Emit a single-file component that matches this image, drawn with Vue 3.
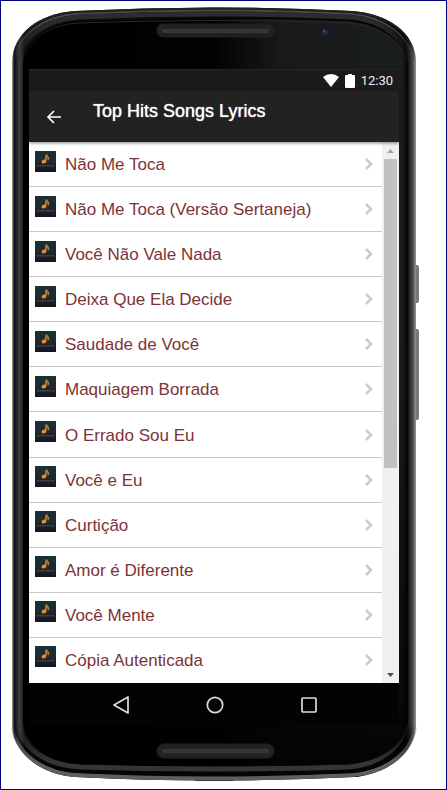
<script setup>
const songs = [
  'Não Me Toca',
  'Não Me Toca (Versão Sertaneja)',
  'Você Não Vale Nada',
  'Deixa Que Ela Decide',
  'Saudade de Você',
  'Maquiagem Borrada',
  'O Errado Sou Eu',
  'Você e Eu',
  'Curtição',
  'Amor é Diferente',
  'Você Mente',
  'Cópia Autenticada',
]
</script>

<template>
  <main class="page">
    <svg class="device" viewBox="0 0 447 790" preserveAspectRatio="none" aria-hidden="true">
      <defs>
        <linearGradient id="side" x1="12" x2="416" y1="0" y2="0" gradientUnits="userSpaceOnUse">
          <stop offset="0" stop-color="#b0b0b0" />
          <stop offset="0.004" stop-color="#333" />
          <stop offset="0.007" stop-color="#0c0c0c" />
          <stop offset="0.012" stop-color="#262626" />
          <stop offset="0.018" stop-color="#3c3c3c" />
          <stop offset="0.024" stop-color="#303030" />
          <stop offset="0.03" stop-color="#101010" />
          <stop offset="0.975" stop-color="#000" />
          <stop offset="0.982" stop-color="#1c1c1c" />
          <stop offset="0.993" stop-color="#505050" />
          <stop offset="1" stop-color="#999" />
        </linearGradient>
        <linearGradient id="face" x1="23" x2="408" y1="0" y2="0" gradientUnits="userSpaceOnUse">
          <stop offset="0" stop-color="#000" />
          <stop offset="0.5" stop-color="#020202" />
          <stop offset="0.67" stop-color="#181919" />
          <stop offset="0.985" stop-color="#1b1e1e" />
          <stop offset="1" stop-color="#040404" />
        </linearGradient>
        <linearGradient id="fade" x1="0" x2="0" y1="20" y2="770" gradientUnits="userSpaceOnUse">
          <stop offset="0" stop-color="#000" stop-opacity="0" />
          <stop offset="0.5" stop-color="#000" stop-opacity="0.1" />
          <stop offset="0.9" stop-color="#000" stop-opacity="0.7" />
          <stop offset="1" stop-color="#000" stop-opacity="0.9" />
        </linearGradient>
        <linearGradient id="ends" x1="0" x2="0" y1="0" y2="790" gradientUnits="userSpaceOnUse">
          <stop offset="0.025" stop-color="#fff" />
          <stop offset="0.08" stop-color="#000" />
          <stop offset="0.91" stop-color="#000" />
          <stop offset="0.965" stop-color="#fff" />
        </linearGradient>
        <mask id="caps" maskUnits="userSpaceOnUse" x="0" y="0" width="447" height="790">
          <path d="M0 0h447v790H0z" fill="url(#ends)" />
        </mask>
      </defs>
      <path d="M415 265h2q2 0 2 3v32q0 3-2 3h-2zM415 329h2q2 0 2 3v85q0 3-2 3h-2z" fill="#777" />
      <path d="M195 778h38v3h-38z" fill="#333" />
      <path d="M12 62C13 33 38 14 75 11Q213 4 352 11C389 14 414 32 416 60V727C413 754 389 773 355 777Q213 784 75 777C39 774 14 752 12 727Z" fill="url(#side)" />
      <g fill="none" mask="url(#caps)">
        <path d="M13 62C14 34 39 15 75 12Q213 5 352 12C388 15 413 33 415 60" stroke="#222" stroke-width="2" />
        <path d="M15 62C17 36 41 17 76 14Q213 7 351 14C386 17 409 36 412 60" stroke="#4a4a4a" stroke-width="2" />
        <path d="M18 62C20 39 43 20 78 17Q213 11 350 17C384 20 406 40 408 62" stroke="#2c2c2c" stroke-width="5" />
        <path d="M13 727C16 751 40 773 76 775Q213 782 353 775C388 772 412 751 415 727" stroke="#5e5e5e" stroke-width="4" />
        <path d="M16 727C20 750 43 769 78 771Q213 776 351 771C385 768 408 750 411 727" stroke="#050505" stroke-width="4" />
        <path d="M19 724C22 748 45 765 80 767Q213 771 349 767C382 764 403 746 406 724" stroke="#353535" stroke-width="5" />
      </g>
      <path d="M23 64C24 43 44 24 76 21Q213 16 348 21C382 24 406 44 408 64V722C404 746 380 762 348 764Q213 768 78 764C46 762 26 745 23 722Z" fill="url(#face)" />
      <path d="M23 64C24 43 44 24 76 21Q213 16 348 21C382 24 406 44 408 64V722C404 746 380 762 348 764Q213 768 78 764C46 762 26 745 23 722Z" fill="url(#fade)" />
      <path d="M26 56C32 37 50 25 78 23Q213 18 348 23C382 26 402 42 405 60" fill="none" stroke="#2b2b2b" mask="url(#caps)" />
      <g fill="#2b2b2b" stroke="#202020" stroke-width="3">
        <rect x="158" y="25" width="115" height="11" rx="5" />
        <rect x="158" y="745" width="115" height="12" rx="6" />
      </g>
      <g fill="#363636" stroke="#151515">
        <rect x="161" y="28" width="109" height="6" rx="3" />
        <rect x="161" y="748" width="109" height="6" rx="3" />
      </g>
      <circle cx="325" cy="32" r="6" fill="#17191e" />
      <circle cx="325" cy="32" r="3" fill="#242d50" />
      <circle cx="324" cy="31" r="1" fill="#4b5c89" />
    </svg>

    <section class="screen">
      <div class="status">
        <svg class="wifi" viewBox="0 0 16 13" aria-hidden="true"><path d="M0 3Q8-3 16 3L8 13Z" fill="#fff" /></svg>
        <svg class="battery" viewBox="0 0 10 14" aria-hidden="true"><path d="M3 0h4v1h2q1 0 1 1v11q0 1-1 1H1q-1 0-1-1V2q0-1 1-1h2z" fill="#fff" /></svg>
        <time>12:30</time>
      </div>

      <header class="bar">
        <button class="back" type="button" aria-label="Back">
          <svg viewBox="0 0 16 16" aria-hidden="true"><path d="M15 8H2M8 2L2 8l6 6" fill="none" stroke="#fff" stroke-width="1.7" /></svg>
        </button>
        <h1>Top Hits Songs Lyrics</h1>
      </header>

      <div class="content">
        <svg class="defs" width="0" height="0" aria-hidden="true">
          <defs>
            <linearGradient id="cover" x1="0" x2="0" y1="0" y2="1">
              <stop offset="0" stop-color="#183139" />
              <stop offset="0.5" stop-color="#1d2932" />
              <stop offset="1" stop-color="#15151f" />
            </linearGradient>
          </defs>
        </svg>
        <ul class="songs">
          <li v-for="song in songs" :key="song">
            <a href="#">
              <svg class="cover" viewBox="0 0 21 21" aria-hidden="true">
                <path d="M0 0h21v21H0z" fill="url(#cover)" />
                <path d="M10.300 10.500L11.500 3.500Q11.700 5.500 13.200 6.500Q14 7.500 12.800 9" fill="none" stroke="#c47a2c" stroke-width="1.700" />
                <ellipse cx="9" cy="10.500" rx="2.500" ry="1.900" fill="#f08c28" transform="rotate(-20 9 10.500)" />
                <path d="M2 14.700h17" stroke="#626064" stroke-width="1.500" stroke-dasharray="2 .5" opacity=".6" />
              </svg>
              <span>{{ song }}</span>
              <svg class="chevron" viewBox="0 0 8 12" aria-hidden="true"><path d="M1 1l5 5-5 5" fill="none" stroke="#ccc" stroke-width="2.600" /></svg>
            </a>
          </li>
        </ul>
        <div class="scroll" aria-hidden="true">
          <svg viewBox="0 0 17 17"><path d="M5 11h7L8.500 7z" fill="#a3a3a3" /></svg>
          <div class="track"><div class="thumb"></div></div>
          <svg viewBox="0 0 17 17"><path d="M5 7h7l-3.500 4z" fill="#505050" /></svg>
        </div>
      </div>

      <nav class="keys">
        <button type="button" aria-label="Back"><svg viewBox="0 0 20 20"><path d="M17 2v16L3 10z" fill="none" stroke="#ddd" stroke-width="1.700" stroke-linejoin="round" /></svg></button>
        <button type="button" aria-label="Home"><svg viewBox="0 0 20 20"><circle cx="10" cy="10" r="7.700" fill="none" stroke="#ddd" stroke-width="1.700" /></svg></button>
        <button type="button" aria-label="Recent apps"><svg viewBox="0 0 20 20"><rect x="3" y="3" width="14" height="14" rx="1" fill="none" stroke="#ddd" stroke-width="1.700" /></svg></button>
      </nav>
    </section>
  </main>
</template>

<style>
body {
  background: #fff;
}
</style>

<style scoped>
.page {
  position: relative;
  box-sizing: border-box;
  min-height: 100vh;
  padding: 68px 47px 63px 28px;
  border: 1px solid #000080;
  display: flex;
  font-family: "Liberation Sans", Arial, sans-serif;
}
.device {
  position: absolute;
  top: -1px;
  left: -1px;
  width: calc(100% + 2px);
  height: calc(100% + 2px);
}
.screen {
  position: relative;
  flex: 1;
  min-width: 0;
  display: flex;
  flex-direction: column;
  background: #222;
}
.status {
  height: 22px;
  padding-right: 6px;
  display: flex;
  align-items: center;
  justify-content: flex-end;
  gap: 6px;
  background: #1b1b1b;
  border-top: 1px solid #1b282c;
  box-sizing: border-box;
  color: #eee;
  font: 13px/20px Roboto, sans-serif;
}
.wifi {
  width: 16px;
  height: 13px;
}
.battery {
  width: 10px;
  height: 14px;
}
.bar {
  position: relative;
  z-index: 1;
  height: 51px;
  display: flex;
  background: #222;
  box-shadow: 0 1px 3px rgba(0, 0, 0, 0.5);
}
button {
  padding: 0;
  border: 0;
  background: none;
  display: grid;
  place-items: center;
}
.back {
  width: 49px;
}
.back svg {
  width: 16px;
  height: 16px;
}
h1 {
  margin: 8px 0 0 15px;
  color: #fff;
  font-size: 18px;
  line-height: 24px;
  font-weight: 400;
  text-shadow: 0 0 1px #fff;
}
.content {
  flex: 1;
  display: flex;
  background: #fff;
}
.defs {
  position: absolute;
}
.songs {
  flex: 1;
  min-width: 0;
  margin: 0;
  padding: 0;
  list-style: none;
  display: grid;
  grid-template-rows: repeat(12, 1fr);
}
li {
  border-bottom: 1px solid #c8c8c8;
}
li:last-child {
  border-color: transparent;
}
a {
  box-sizing: border-box;
  height: 100%;
  padding: 2px 9px 0 6px;
  display: flex;
  align-items: center;
  gap: 9px;
  color: #7d3336;
  font-size: 17px;
  line-height: 22px;
  text-decoration: none;
}
a span {
  flex: 1;
}
.cover {
  width: 21px;
  height: 21px;
  margin-bottom: 8px;
}
.chevron {
  width: 8px;
  height: 12px;
  margin-bottom: 2px;
}
.scroll {
  width: 17px;
  display: flex;
  flex-direction: column;
  background: #f0f0f0;
}
.scroll svg {
  width: 17px;
  height: 17px;
}
.track {
  flex: 1;
  padding: 0 2px;
}
.thumb {
  height: 61%;
  background: #c1c1c1;
}
.keys {
  height: 43px;
  padding: 0 43px 0 45px;
  display: flex;
  justify-content: space-around;
  background: #030303;
}
.keys svg {
  width: 20px;
  height: 20px;
}
</style>
